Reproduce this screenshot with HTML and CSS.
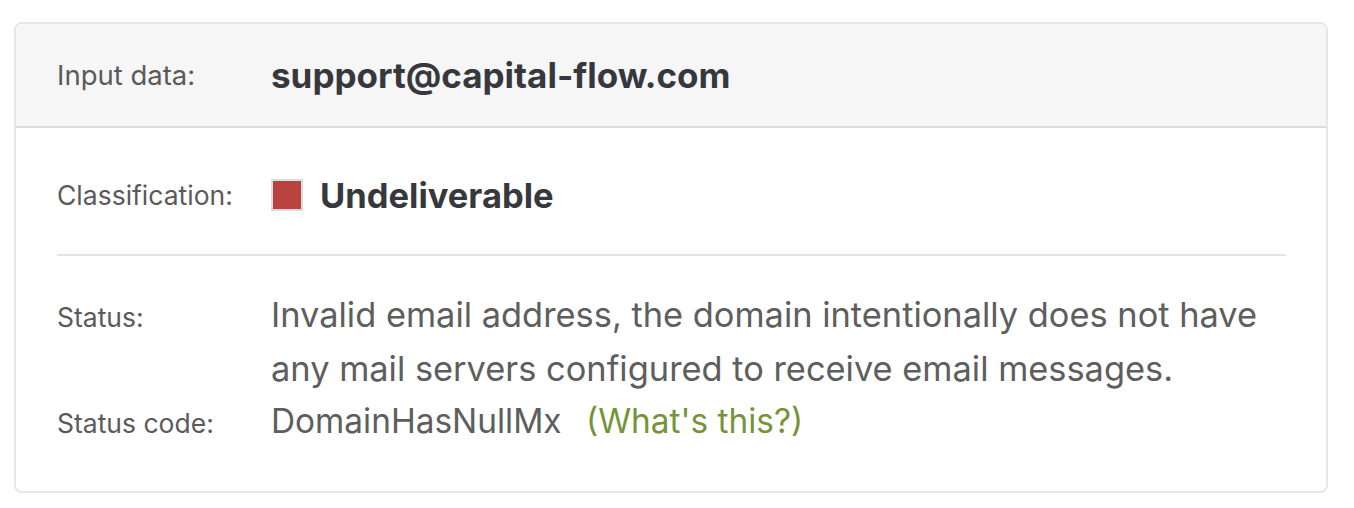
FILE: index.html
```html
<!DOCTYPE html>
<html lang="en">
<head>
    <meta charset="UTF-8">
    <meta name="viewport" content="width=device-width, initial-scale=1.0">
    <title>Email verification result</title>
    <link rel="stylesheet" href="styles.css">
</head>
<body>
    <div class="result-card">
        <!-- Input -->
        <div class="result-head">
            <span class="label label-lg">Input data:</span>
            <span class="email">support@capital-flow.com</span>
        </div>

        <div class="result-body">
            <!-- Classification -->
            <div class="class-row">
                <span class="label">Classification:</span>
                <span class="class-value">
                    <span class="swatch swatch-bad"></span>
                    <span class="class-name">Undeliverable</span>
                </span>
            </div>

            <!-- Status -->
            <div class="status-grid">
                <span class="label">Status:</span>
                <span class="status-text">Invalid email address, the domain intentionally does not have any mail servers configured to receive email messages.</span>
                <span class="label">Status code:</span>
                <span class="status-code">DomainHasNullMx <a href="#" class="help-link">(What's this?)</a></span>
            </div>
        </div>
    </div>
</body>
</html>
```
FILE: styles.css
```css
body {
    margin: 0;
    padding: 22px 26px 0 14px;
    font-family: Inter, "Open Sans", sans-serif;
    background-color: #fff;
}
.result-card {
    border: 2px solid #e7e7eb;
    border-radius: 8px;
    overflow: hidden;
}
.result-head {
    display: flex;
    align-items: center;
    height: 102px;
    padding: 0 41px;
    background-color: #f6f6f6;
    border-bottom: 2px solid #dcdcdc;
}
.label {
    flex: 0 0 214px;
    font-size: 26.5px;
    color: #5a5a5a;
}
.label-lg {
    font-size: 27.5px;
}
.email {
    font-size: 35px;
    font-weight: 700;
    color: #37383d;
}
.result-body {
    padding: 0 40px 0 41px;
}
.class-row {
    display: flex;
    align-items: center;
    height: 44px;
    padding: 45px 0 37px;
    border-bottom: 2px solid #e4e4e4;
}
.class-value {
    display: flex;
    align-items: center;
    gap: 17px;
}
.swatch {
    width: 28px;
    height: 28px;
    border: 2px solid #dddddd;
}
.swatch-bad {
    background-color: #b9433e;
}
.class-name {
    font-size: 34.5px;
    font-weight: 700;
    color: #37383d;
}
.status-grid {
    display: grid;
    grid-template-columns: 214px 1fr;
    align-items: baseline;
    line-height: 53.5px;
    padding: 32px 0 40px;
}
.status-text {
    font-size: 34.4px;
    color: #5e5e5e;
}
.status-code {
    font-size: 33.4px;
    color: #5e5e5e;
}
.help-link {
    margin-left: 15px;
    color: #77933a;
    text-decoration: none;
}
```
